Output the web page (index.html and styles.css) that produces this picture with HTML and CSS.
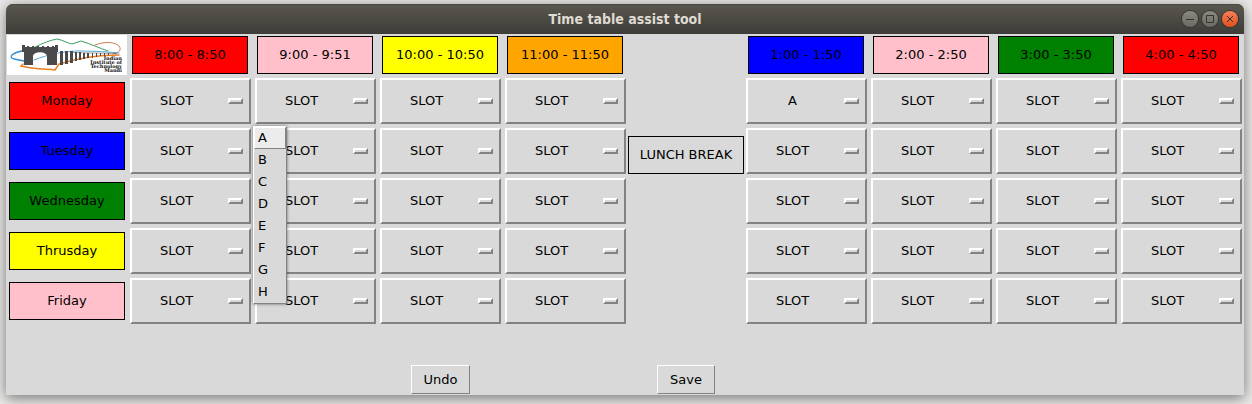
FILE: index.html
```html
<!DOCTYPE html>
<html lang="en">
<head>
<meta charset="utf-8">
<title>Time table assist tool</title>
<link rel="stylesheet" href="styles.css">
</head>
<body>
<div class="window">
  <header class="titlebar">
    <h1 class="title">Time table assist tool</h1>
    <div class="controls">
      <button class="control" type="button" aria-label="Minimize"><svg viewBox="0 0 16 16"><path d="M4 8.5h8"/></svg></button>
      <button class="control" type="button" aria-label="Maximize"><svg viewBox="0 0 16 16"><path d="M4.500 4.500h7v7h-7z"/></svg></button>
      <button class="control control-close" type="button" aria-label="Close"><svg viewBox="0 0 16 16"><path d="M5 5l6 6M11 5l-6 6"/></svg></button>
    </div>
  </header>
  <main class="timetable" id="timetable">
    <svg class="logo" viewBox="0 0 120 40" role="img" aria-label="Indian Institute of Technology Mandi">
      <rect width="120" height="40" fill="#fff"/>
      <g fill="none" stroke-linecap="round">
        <path d="M28 12C36 8 44 5 50 4C56 5 60 8 65 9L74 6C84 9 92 13 101 16" stroke="#3f9e63" stroke-width="1"/>
        <path d="M88 10C98 6 108 7 112 11C115 15 112 18 106 19" stroke="#cf7a50" stroke-width="1"/>
        <path d="M15 16C5 18 1 22 7 24L17 26" stroke="#2f8fd0" stroke-width="1.3"/>
        <path d="M27 25C42 19 58 16 72 16C88 16 102 17 112 18" stroke="#55a9d8" stroke-width="1"/>
        <path d="M16 29L14 31C26 34 38 34 48 35L52 29C68 24 90 20 112 20" stroke="#ea7e22" stroke-width="1.500"/>
      </g>
      <g fill="#4a4a4c">
        <path d="M15 17V10H18V12H20V11H22V12H25V11H27V12H30V11H32V12H35V11H37V12H40V11H42V12H45V11H47V12H48V10H51V17H50V30H40V21C39 16 27 16 26 21V30H17V17Z"/>
        <path d="M53 16h3v14h-3zM58 16h3v13h-3zM63 16h3v12h-3zM68 17h2v9h-2zM72 17h2v8h-2zM76 18h2v6h-2zM80 18h2v5h-2zM85 18h1v5h-1zM89 18h1v4h-1zM93 18h1v3h-1zM97 18h1v3h-1zM101 18h1v2h-1z"/>
        <path d="M66 17L110 18V19L66 18Z" opacity="0.5"/>
      </g>
      <path d="M28 21C30 18 36 18 38 21" fill="none" stroke="#fff" stroke-width="1"/>
      <g class="logo-text" text-anchor="end">
        <text x="115" y="25">Indian</text>
        <text x="115" y="29">Institute of</text>
        <text x="115" y="33">Technology</text>
        <text x="115" y="37">Mandi</text>
      </g>
    </svg>
    <div class="tag time red">8:00 - 8:50</div>
    <div class="tag time pink">9:00 - 9:51</div>
    <div class="tag time yellow">10:00 - 10:50</div>
    <div class="tag time orange">11:00 - 11:50</div>
    <div class="tag lunch">LUNCH BREAK</div>
    <div class="tag time after-lunch blue">1:00 - 1:50</div>
    <div class="tag time pink">2:00 - 2:50</div>
    <div class="tag time green">3:00 - 3:50</div>
    <div class="tag time red">4:00 - 4:50</div>
    <button class="action undo" type="button">Undo</button>
    <button class="action save" type="button">Save</button>
  </main>
</div>
<script src="app.js"></script>
</body>
</html>
```
FILE: styles.css
```css
*,
*::after {
  box-sizing: border-box;
}

body {
  margin: 0;
  padding: 4px 8px 9px 6px;
  background: #eae9e8;
  color: #000;
  font: 13px/16px "DejaVu Sans", sans-serif;
}

button,
select {
  margin: 0;
  color: inherit;
  font: inherit;
}

.window {
  background: #d9d9d9;
  border-radius: 7px 7px 0 0;
  box-shadow: 0 3px 14px rgba(0, 0, 0, 0.5);
}

.titlebar {
  display: grid;
  grid-template-columns: 1fr auto 1fr;
  align-items: center;
  height: 30px;
  padding: 0 6px;
  border-radius: 7px 7px 0 0;
  background: linear-gradient(#5a574e, #3d3c38);
  box-shadow: inset 0 1px #4a4841;
}

.title {
  grid-column: 2;
  margin: 0;
  color: #dfdbd2;
  font: bold 14px/20px "DejaVu Sans Condensed", "Noto Sans", sans-serif;
}

.controls {
  display: flex;
  gap: 4px;
  justify-self: end;
}

.control {
  width: 16px;
  height: 16px;
  padding: 0;
  border: 0;
  border-radius: 50%;
  background: linear-gradient(#8a8880, #6b6962);
  box-shadow: 0 0 0 1px #35342f;
}

.control-close {
  background: linear-gradient(#f58057, #e0501f);
}

.control svg {
  display: block;
  fill: none;
  stroke: #35342f;
}

.timetable {
  display: grid;
  grid-template-columns: 122fr repeat(4, 125fr) 116fr repeat(4, 125fr);
  grid-template-rows: 42px repeat(5, 50px) auto;
}

.logo {
  width: 100%;
  padding: 1px;
}

.logo-text {
  fill: #111;
  font: bold 5px "DejaVu Serif", serif;
}

.tag {
  display: flex;
  align-items: center;
  justify-content: center;
  height: 38px;
  border: 1px solid #000;
  white-space: nowrap;
}

.time {
  margin: 2px 5px 2px 4px;
}

.day {
  grid-column: 1;
  margin: 6px 3px;
}

.lunch {
  grid-area: 1 / 6 / span 5 / 7;
  align-self: center;
}

.red { background: #f00; }
.pink { background: #ffc0cb; }
.yellow { background: #ff0; }
.orange { background: #ffa500; }
.blue { background: #00f; }
.green { background: #008000; }

.slot {
  position: relative;
  display: grid;
  margin: 2px;
}

.after-lunch {
  grid-column: 7;
}

.slot select,
.slot::after {
  grid-area: 1 / 1;
}

.slot select {
  appearance: none;
  width: 100%;
  padding: 0 28px 0 0;
  border: 2px solid;
  border-color: #fff #828282 #828282 #fff;
  border-radius: 0;
  background: #d9d9d9;
  text-align: center;
  text-align-last: center;
}

.slot::after {
  content: "";
  place-self: center end;
  width: 15px;
  height: 6px;
  margin-right: 8px;
  border: 2px solid;
  border-color: #fff #828282 #828282 #fff;
  pointer-events: none;
}

.menu {
  position: absolute;
  z-index: 1;
  top: 48px;
  left: -2px;
  width: 34px;
  border: 1px solid;
  border-color: #fff #828282 #828282 #fff;
  background: #d9d9d9;
  box-shadow: 0 0 3px rgba(0, 0, 0, 0.5);
}

.option {
  display: block;
  width: 100%;
  height: 22px;
  padding: 0 3px;
  border: 1px solid transparent;
  background: none;
  text-align: left;
}

.option-active {
  border-color: #fff #828282 #828282 #fff;
  background: #ececec;
}

.action {
  grid-row: 7;
  justify-self: center;
  margin: 39px 0 1px;
  padding: 6px 12px 5px;
  border: 1px solid;
  border-color: #fff #828282 #828282 #fff;
  background: #d9d9d9;
}

.undo {
  grid-column: 4;
}

.save {
  grid-column: 6;
}
```
FILE: app.js
```js
const days = [
  { name: "Monday", color: "red", picks: { 4: "A" } },
  { name: "Tuesday", color: "blue", picks: {} },
  { name: "Wednesday", color: "green", picks: {} },
  { name: "Thrusday", color: "yellow", picks: {} },
  { name: "Friday", color: "pink", picks: {} },
];
const letters = ["A", "B", "C", "D", "E", "F", "G", "H"];
const table = document.getElementById("timetable");
const undo = table.querySelector(".undo");
const openSlot = { day: 0, period: 1 };

function makeMenu() {
  const menu = document.createElement("div");
  menu.className = "menu";
  letters.forEach((letter, i) => {
    const option = document.createElement("button");
    option.type = "button";
    option.className = i === 0 ? "option option-active" : "option";
    option.textContent = letter;
    menu.append(option);
  });
  return menu;
}

days.forEach((day, row) => {
  const label = document.createElement("div");
  label.className = `tag day ${day.color}`;
  label.textContent = day.name;
  label.style.gridRow = row + 2;
  table.insertBefore(label, undo);

  for (let period = 0; period < 8; period++) {
    const slot = document.createElement("div");
    slot.className = "slot";
    slot.style.gridRow = row + 2;
    slot.style.gridColumn = period + (period < 4 ? 2 : 3);
    const select = document.createElement("select");
    select.setAttribute("aria-label", `${day.name}, period ${period + 1}`);
    ["SLOT", ...letters].forEach((text) => select.add(new Option(text)));
    select.value = day.picks[period] || "SLOT";
    slot.append(select);
    if (row === openSlot.day && period === openSlot.period) {
      slot.append(makeMenu());
    }
    table.insertBefore(slot, undo);
  }
});
```
